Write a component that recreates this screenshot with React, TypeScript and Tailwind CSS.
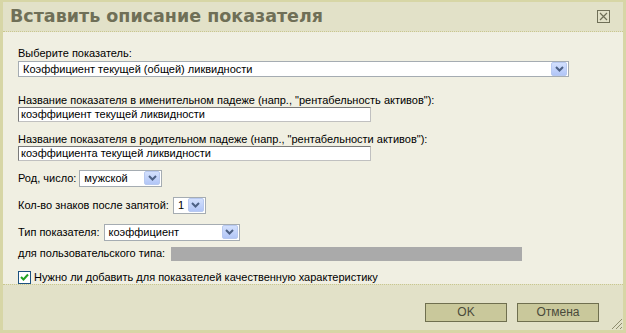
import React from 'react';

const FONT = { fontFamily: '"Liberation Sans", Arial, sans-serif' };

function Arrow() {
  return (
    <div className="w-[16px] h-[14px] my-auto mr-[1px] rounded-[2px] bg-gradient-to-b from-[#d3e0fd] to-[#b2c6f7] border border-[#b8c9f0] flex items-center justify-center">
      <svg width="9" height="6" viewBox="0 0 9 6">
        <polyline points="1,1 4.5,4.5 8,1" fill="none" stroke="#4d6185" strokeWidth="2" />
      </svg>
    </div>
  );
}

function Select({ value, className }: { value: string; className: string }) {
  return (
    <div className={`flex bg-white border border-[#a5acb2] text-[11px] text-black ${className}`}>
      <span className="flex-1 pl-[4px] leading-[15px] whitespace-nowrap overflow-hidden">{value}</span>
      <Arrow />
    </div>
  );
}

function TextInput({ value }: { value: string }) {
  return (
    <div className="w-[353px] h-[15px] bg-white border border-[#7a7a7a] border-r-[#c0c0c0] border-b-[#c0c0c0] pl-[2px] text-[11px] leading-[13px] text-black">
      {value}
    </div>
  );
}

export default function App() {
  return (
    <div
      className="w-[626px] h-[333px] border-[3px] border-t-[2px] border-[#d7d6a6] bg-[#f0efe2] flex flex-col overflow-hidden text-black"
      style={FONT}
    >
      {/* Title */}
      <div className="h-[31px] bg-[#e2e1c8] border-b border-dotted border-[#c9c78e] flex items-center pl-[7px] pr-[13px]">
        <h1
          className="flex-1 text-[17.5px] font-bold text-[#6f6f57] leading-none"
          style={{ fontFamily: '"DejaVu Sans", Verdana, sans-serif' }}
        >
          Вставить описание показателя
        </h1>
        <svg width="13" height="13" viewBox="0 0 13 13">
          <rect x="0.5" y="0.5" width="12" height="12" fill="none" stroke="#6f6f57" />
          <path d="M3 3 L10 10 M10 3 L3 10" stroke="#6f6f57" strokeWidth="1.2" />
        </svg>
      </div>

      {/* Body */}
      <div className="flex-1 flex flex-col pl-[15px] pt-[15px] text-[11px] leading-[13px]">
        <div>Выберите показатель:</div>
        <Select value="Коэффициент текущей (общей) ликвидности" className="w-[551px] h-[16px] mt-[1px]" />

        <div className="mt-[17px]">Название показателя в именительном падеже (напр., "рентабельность активов"):</div>
        <TextInput value="коэффициент текущей ликвидности" />

        <div className="mt-[11px]">Название показателя в родительном падеже (напр., "рентабельности активов"):</div>
        <TextInput value="коэффициента текущей ликвидности" />

        <div className="flex items-center mt-[9px] gap-[3px]">
          <span>Род, число:</span>
          <Select value="мужской" className="w-[83px] h-[17px]" />
        </div>

        <div className="flex items-center mt-[10px] gap-[4px]">
          <span>Кол-во знаков после запятой:</span>
          <Select value="1" className="w-[33px] h-[17px]" />
        </div>

        <div className="flex items-center mt-[10px] gap-[4px]">
          <span>Тип показателя:</span>
          <Select value="коэффициент" className="w-[136px] h-[17px]" />
        </div>

        <div className="flex items-center mt-[6px] gap-[6px]">
          <span>для пользовательского типа:</span>
          <div className="w-[351px] h-[14px] bg-[#aaaaaa]" />
        </div>

        <div className="flex items-center mt-[10px] gap-[3px]">
          <div className="w-[13px] h-[13px] border border-[#1c5180] bg-white flex items-center justify-center">
            <svg width="9" height="9" viewBox="0 0 9 9">
              <polyline points="1,4 3.5,6.5 8,1.5" fill="none" stroke="#21a121" strokeWidth="2" />
            </svg>
          </div>
          <span>Нужно ли добавить для показателей качественную характеристику</span>
        </div>
      </div>

      {/* Footer */}
      <div className="h-[47px] bg-[#e2e1c8] border-t border-dotted border-[#c9c78e] flex items-start justify-end gap-[10px] pr-[24px] pt-[18px] relative text-[12px]">
        <button className="w-[82px] h-[19px] bg-[#c9c89b] border border-[#6f6f4f] text-[#4a4a3a] leading-[17px]">OK</button>
        <button className="w-[82px] h-[19px] bg-[#c9c89b] border border-[#6f6f4f] text-[#4a4a3a] leading-[17px]">Отмена</button>
        <svg className="absolute right-0 bottom-0" width="12" height="12" viewBox="0 0 12 12">
          <path d="M11 1 L1 11 M11 5 L5 11 M11 9 L9 11" stroke="#8e8d6e" strokeWidth="1" />
        </svg>
      </div>
    </div>
  );
}
